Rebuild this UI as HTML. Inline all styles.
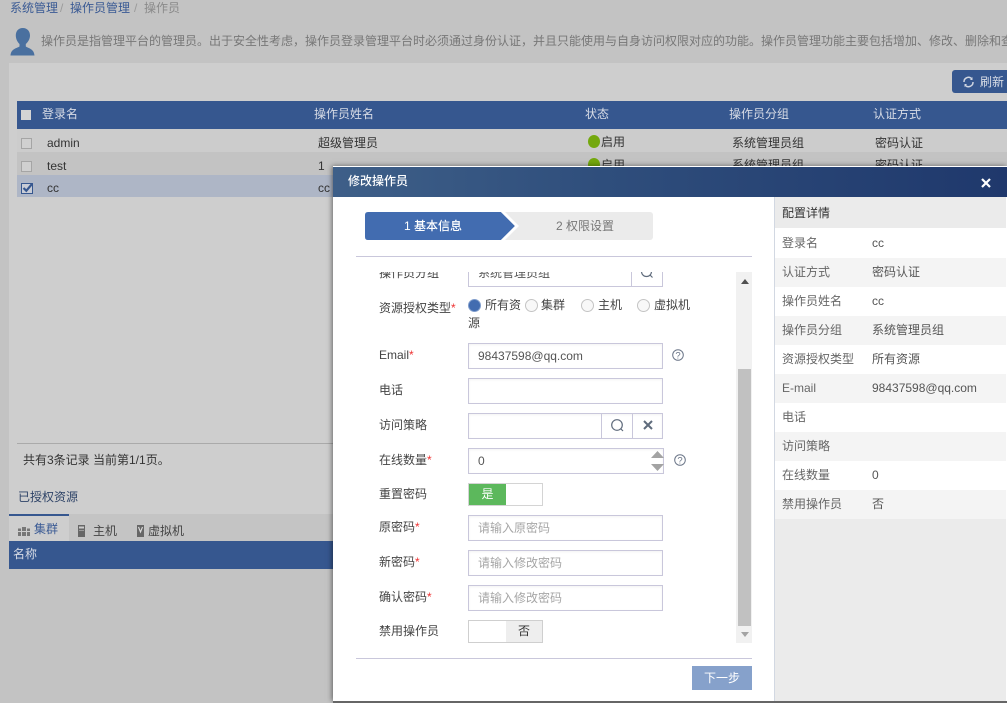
<!DOCTYPE html>
<html lang="zh">
<head>
<meta charset="utf-8">
<title>修改操作员</title>
<style>
html,body{margin:0;padding:0;width:1007px;height:703px;overflow:hidden;background:#c3c3c3;}
body{position:relative;font-family:"Liberation Sans","Noto Sans CJK SC",sans-serif;font-size:12px;color:#333;}
.a{position:absolute;white-space:nowrap;line-height:16px;}
.box{position:absolute;box-sizing:border-box;}
.inp{position:absolute;box-sizing:border-box;left:468px;width:195px;height:26px;border:1px solid #c9c7db;background:#fff;box-shadow:inset 0 1px 2px rgba(0,0,0,.05);line-height:24px;padding-left:9px;color:#555;white-space:nowrap;}
.ph{color:#a6a6a6;}
.lbl{position:absolute;left:379px;line-height:16px;color:#444;white-space:nowrap;}
.lbl i{color:#e33;font-style:normal;}
.hd{position:absolute;top:106px;line-height:16px;color:#d8dce6;white-space:nowrap;}
.c{position:absolute;line-height:16px;color:#333;white-space:nowrap;}
.cb{position:absolute;left:21px;width:9px;height:9px;border:1px solid #a5a5a5;background:#d0d0d0;}
.row{position:absolute;left:775px;width:231px;height:29px;line-height:28px;color:#666;}
.row span{position:absolute;left:7px;white-space:nowrap;}
.row b{position:absolute;left:97px;font-weight:normal;color:#555;white-space:nowrap;}
.radio{position:absolute;top:299px;width:11px;height:11px;border:1px solid #c4c4c4;border-radius:50%;background:#f8f8f8;}
.dot{position:absolute;left:588px;width:12px;height:13px;border-radius:50%;background:#74a80e;}
</style>
</head>
<body>
<!-- background page -->
<div class="a" style="left:10px;top:0;color:#3a5a94;">系统管理</div>
<div class="a" style="left:60px;top:0;color:#9a9a9a;">/</div>
<div class="a" style="left:70px;top:0;color:#3a5a94;">操作员管理</div>
<div class="a" style="left:134px;top:0;color:#9a9a9a;">/</div>
<div class="a" style="left:144px;top:0;color:#8a8a8a;">操作员</div>

<svg class="box" style="left:10px;top:27px" width="25" height="29" viewBox="0 0 25 29"><path d="M12.800 1C8 1 5.800 4.500 5.800 8.500C5.800 12 7.500 15 9.500 17L9.500 19.500C6 21.500 1 22 .5 28.500L24.500 28.500C24 22 19 21.500 15.800 19.500L15.800 17C18 15 20 12 20 8.500C20 4.500 17.500 1 12.800 1Z" fill="#4a709f"/></svg>
<div class="a" style="left:41px;top:33px;width:966px;overflow:hidden;color:#777;">操作员是指管理平台的管理员。出于安全性考虑，操作员登录管理平台时必须通过身份认证，并且只能使用与自身访问权限对应的功能。操作员管理功能主要包括增加、修改、删除和查询操作员。</div>

<div class="box" style="left:9px;top:63px;width:998px;height:451px;background:#cecece;"></div>

<div class="box" style="left:952px;top:70px;width:55px;height:23px;background:#36578f;border-radius:3px 0 0 3px;"></div>
<svg class="box" style="left:962px;top:76px" width="13" height="12" viewBox="0 0 13 12"><path d="M2 6A4.500 4.500 0 0 1 9.800 2.800M11 6A4.500 4.500 0 0 1 3.200 9.200" fill="none" stroke="#d0d6e2" stroke-width="1.500"/><path d="M10.500 1V4H8ZM2.500 11V8H5Z" fill="#d0d6e2"/></svg>
<div class="a" style="left:980px;top:74px;color:#d8dce6;">刷新</div>

<div class="box" style="left:17px;top:101px;width:990px;height:28px;background:#36578f;"></div>
<div class="box" style="left:21px;top:110px;width:10px;height:10px;background:#d4d4d4;"></div>
<div class="hd" style="left:42px;">登录名</div>
<div class="hd" style="left:314px;">操作员姓名</div>
<div class="hd" style="left:585px;">状态</div>
<div class="hd" style="left:729px;">操作员分组</div>
<div class="hd" style="left:873px;">认证方式</div>

<div class="box" style="left:17px;top:129px;width:990px;height:23px;background:#cccccc;"></div>
<div class="box" style="left:17px;top:152px;width:990px;height:23px;background:#c3c3c3;"></div>
<div class="box" style="left:17px;top:175px;width:990px;height:22px;background:#aeb6c6;"></div>

<div class="cb" style="top:138px;"></div>
<div class="cb" style="top:161px;"></div>
<svg class="box" style="left:21px;top:182px" width="13" height="12" viewBox="0 0 13 12"><rect x=".5" y="1.500" width="11" height="10" fill="#c8ccd6" stroke="#36578f"/><path d="M2.500 6L5.300 8.800L11 2" fill="none" stroke="#36578f" stroke-width="2.200"/></svg>

<div class="c" style="left:47px;top:135px;">admin</div>
<div class="c" style="left:47px;top:158px;">test</div>
<div class="c" style="left:47px;top:180px;">cc</div>
<div class="c" style="left:318px;top:135px;">超级管理员</div>
<div class="c" style="left:318px;top:158px;">1</div>
<div class="c" style="left:318px;top:180px;">cc</div>
<div class="dot" style="top:135px;"></div>
<div class="c" style="left:601px;top:134px;">启用</div>
<div class="dot" style="top:158px;"></div>
<div class="c" style="left:601px;top:157px;">启用</div>
<div class="c" style="left:732px;top:135px;">系统管理员组</div>
<div class="c" style="left:732px;top:157px;">系统管理员组</div>
<div class="c" style="left:875px;top:135px;">密码认证</div>
<div class="c" style="left:875px;top:157px;">密码认证</div>

<div class="box" style="left:17px;top:443px;width:320px;height:1px;background:#aaaaaa;"></div>
<div class="c" style="left:23px;top:452px;">共有3条记录 当前第1/1页。</div>
<div class="c" style="left:18px;top:489px;color:#2f4468;">已授权资源</div>

<div class="box" style="left:9px;top:514px;width:325px;height:27px;background:#c4c4c4;"></div>
<div class="box" style="left:9px;top:514px;width:60px;height:27px;background:#cecece;border-top:2px solid #36578f;"></div>
<svg class="box" style="left:18px;top:527px" width="12" height="9" viewBox="0 0 12 9"><path d="M0 1.500H3V9H0ZM4 0H8V9H4ZM9 1.500H12V9H9Z" fill="#777"/><path d="M0 4.500H12" stroke="#cecece"/></svg>
<div class="c" style="left:34px;top:521px;color:#3a5a94;">集群</div>
<svg class="box" style="left:78px;top:525px" width="7" height="12" viewBox="0 0 7 12"><rect width="7" height="12" fill="#666"/><rect x="1" y="1.500" width="5" height="2" fill="#ccc"/><rect x="1" y="5" width="5" height="1" fill="#999"/></svg>
<div class="c" style="left:93px;top:523px;color:#444;">主机</div>
<svg class="box" style="left:137px;top:525px" width="7" height="12" viewBox="0 0 7 12"><rect width="7" height="12" fill="#666"/><path d="M1.500 2L3.500 7L5.500 2" fill="none" stroke="#ddd" stroke-width="1.100"/></svg>
<div class="c" style="left:148px;top:523px;color:#444;">虚拟机</div>

<div class="box" style="left:9px;top:541px;width:325px;height:28px;background:#36578f;"></div>
<div class="c" style="left:13px;top:546px;color:#d8dce6;">名称</div>

<!-- modal -->
<div class="box" style="left:333px;top:166px;width:674px;height:535px;background:#fff;box-shadow:-1px 0 5px rgba(0,0,0,.5);"></div>
<div class="box" style="left:333px;top:167px;width:674px;height:30px;background:linear-gradient(90deg,#3e5f88 0%,#2f4e7c 40%,#1f386c 100%);"></div>
<div class="a" style="left:348px;top:173px;color:#fff;font-weight:500;">修改操作员</div>
<svg class="box" style="left:981px;top:178px" width="10" height="10" viewBox="0 0 10 10"><path d="M1 1L9 9M9 1L1 9" stroke="#fff" stroke-width="2.200"/></svg>

<!-- steps -->
<div class="box" style="left:505px;top:212px;width:148px;height:28px;background:#ebebeb;border-radius:0 3px 3px 0;"></div>
<svg class="box" style="left:365px;top:212px" width="155" height="28" viewBox="0 0 155 28"><path d="M3 0H136L150 14L136 28H3Q0 28 0 25V3Q0 0 3 0Z" fill="#426cb0"/><path d="M136 0L150 14L136 28H140L154 14L140 0Z" fill="#fff"/></svg>
<div class="a" style="left:404px;top:218px;color:#fff;font-weight:500;">1 基本信息</div>
<div class="a" style="left:556px;top:218px;color:#777;">2 权限设置</div>
<div class="box" style="left:356px;top:256px;width:396px;height:1px;background:#c9c7db;"></div>

<!-- clipped form row -->
<div class="box" style="left:356px;top:272px;width:380px;height:15px;overflow:hidden;">
  <div class="a" style="left:23px;top:-7px;color:#444;">操作员分组</div>
  <div class="box" style="left:112px;top:-11px;width:195px;height:26px;border:1px solid #c9c7db;background:#fff;"></div>
  <div class="a" style="left:122px;top:-7px;color:#555;">系统管理员组</div>
  <div class="box" style="left:275px;top:-11px;width:1px;height:26px;background:#c9c7db;"></div>
  <svg class="box" style="left:284px;top:-7px" width="14" height="14" viewBox="0 0 14 14"><circle cx="6.500" cy="6.500" r="5" fill="none" stroke="#5f6b7c" stroke-width="1.200"/><path d="M10 10L12.500 12.500" stroke="#5f6b7c" stroke-width="1.200"/></svg>
</div>

<!-- radios -->
<div class="lbl" style="top:300px;">资源授权类型<i>*</i></div>
<div class="box" style="left:468px;top:299px;width:13px;height:13px;border-radius:50%;background:#426cb0;border:1px solid #7f9ccb;"></div>
<div class="a" style="left:485px;top:297px;color:#444;">所有资</div>
<div class="a" style="left:468px;top:315px;color:#444;">源</div>
<div class="radio" style="left:525px;"></div>
<div class="a" style="left:541px;top:297px;color:#444;">集群</div>
<div class="radio" style="left:581px;"></div>
<div class="a" style="left:598px;top:297px;color:#444;">主机</div>
<div class="radio" style="left:637px;"></div>
<div class="a" style="left:654px;top:297px;color:#444;">虚拟机</div>

<!-- fields -->
<div class="lbl" style="top:347px;">Email<i>*</i></div>
<div class="inp" style="top:343px;">98437598@qq.com</div>
<svg class="box" style="left:672px;top:349px" width="12" height="12" viewBox="0 0 12 12"><circle cx="6" cy="6" r="5.300" fill="none" stroke="#6b7688"/><text x="6" y="9.300" font-size="9.500" font-family="Liberation Sans" text-anchor="middle" fill="#6b7688">?</text></svg>

<div class="lbl" style="top:382px;">电话</div>
<div class="inp" style="top:378px;"></div>

<div class="lbl" style="top:417px;">访问策略</div>
<div class="inp" style="top:413px;"></div>
<div class="box" style="left:601px;top:414px;width:1px;height:24px;background:#c9c7db;"></div>
<div class="box" style="left:632px;top:414px;width:1px;height:24px;background:#c9c7db;"></div>
<svg class="box" style="left:610px;top:418px" width="14" height="14" viewBox="0 0 14 14"><circle cx="7" cy="7" r="5.300" fill="none" stroke="#5f6b7c" stroke-width="1.200"/><path d="M10.500 10.500L13 13" stroke="#5f6b7c" stroke-width="1.200"/></svg>
<svg class="box" style="left:643px;top:420px" width="10" height="10" viewBox="0 0 10 10"><path d="M1 1L9 9M9 1L1 9" stroke="#5f6b7c" stroke-width="2"/></svg>

<div class="lbl" style="top:452px;">在线数量<i>*</i></div>
<div class="inp" style="top:448px;width:196px;">0</div>
<svg class="box" style="left:651px;top:451px" width="13" height="21" viewBox="0 0 13 21"><path d="M6.500 0L13 7H0ZM0 13H13L6.500 20Z" fill="#a3a3a3"/></svg>
<svg class="box" style="left:674px;top:454px" width="12" height="12" viewBox="0 0 12 12"><circle cx="6" cy="6" r="5.300" fill="none" stroke="#6b7688"/><text x="6" y="9.300" font-size="9.500" font-family="Liberation Sans" text-anchor="middle" fill="#6b7688">?</text></svg>

<div class="lbl" style="top:486px;">重置密码</div>
<div class="box" style="left:468px;top:483px;width:75px;height:23px;border:1px solid #d4d4d4;background:#fff;"></div>
<div class="box" style="left:469px;top:484px;width:37px;height:21px;background:#5cb85c;color:#fff;text-align:center;line-height:20px;">是</div>

<div class="lbl" style="top:519px;">原密码<i>*</i></div>
<div class="inp ph" style="top:515px;">请输入原密码</div>
<div class="lbl" style="top:554px;">新密码<i>*</i></div>
<div class="inp ph" style="top:550px;">请输入修改密码</div>
<div class="lbl" style="top:589px;">确认密码<i>*</i></div>
<div class="inp ph" style="top:585px;">请输入修改密码</div>

<div class="lbl" style="top:623px;">禁用操作员</div>
<div class="box" style="left:468px;top:620px;width:75px;height:23px;border:1px solid #cfcfcf;background:#fff;"></div>
<div class="box" style="left:506px;top:621px;width:36px;height:21px;background:#eeeeee;color:#333;text-align:center;line-height:20px;">否</div>

<!-- scrollbar -->
<div class="box" style="left:736px;top:272px;width:16px;height:371px;background:#f1f1f1;"></div>
<div class="box" style="left:738px;top:369px;width:13px;height:257px;background:#c1c1c1;"></div>
<svg class="box" style="left:741px;top:279px" width="8" height="5" viewBox="0 0 8 5"><path d="M4 0L8 5H0Z" fill="#505050"/></svg>
<svg class="box" style="left:741px;top:632px" width="8" height="5" viewBox="0 0 8 5"><path d="M0 0H8L4 5Z" fill="#a3a3a3"/></svg>

<div class="box" style="left:356px;top:658px;width:396px;height:1px;background:#c9c7db;"></div>
<div class="box" style="left:692px;top:666px;width:60px;height:24px;background:#86a1cb;color:#fff;text-align:center;line-height:24px;">下一步</div>

<!-- side panel -->
<div class="box" style="left:774px;top:197px;width:232px;height:504px;background:#ebebeb;border-left:1px solid #d2d8e2;"></div>
<div class="a" style="left:782px;top:205px;color:#333;">配置详情</div>
<div class="row" style="top:228px;height:30px;line-height:30px;background:#fff;"><span>登录名</span><b>cc</b></div>
<div class="row" style="top:258px;background:#f4f4f4;"><span>认证方式</span><b>密码认证</b></div>
<div class="row" style="top:287px;background:#fff;"><span>操作员姓名</span><b>cc</b></div>
<div class="row" style="top:316px;background:#f4f4f4;"><span>操作员分组</span><b>系统管理员组</b></div>
<div class="row" style="top:345px;background:#fff;"><span>资源授权类型</span><b>所有资源</b></div>
<div class="row" style="top:374px;background:#f4f4f4;"><span>E-mail</span><b>98437598@qq.com</b></div>
<div class="row" style="top:403px;background:#fff;"><span>电话</span></div>
<div class="row" style="top:432px;background:#f4f4f4;"><span>访问策略</span></div>
<div class="row" style="top:461px;background:#fff;"><span>在线数量</span><b>0</b></div>
<div class="row" style="top:490px;background:#f4f4f4;"><span>禁用操作员</span><b>否</b></div>
<div class="box" style="left:333px;top:701px;width:674px;height:2px;background:#666666;"></div>
</body>
</html>
